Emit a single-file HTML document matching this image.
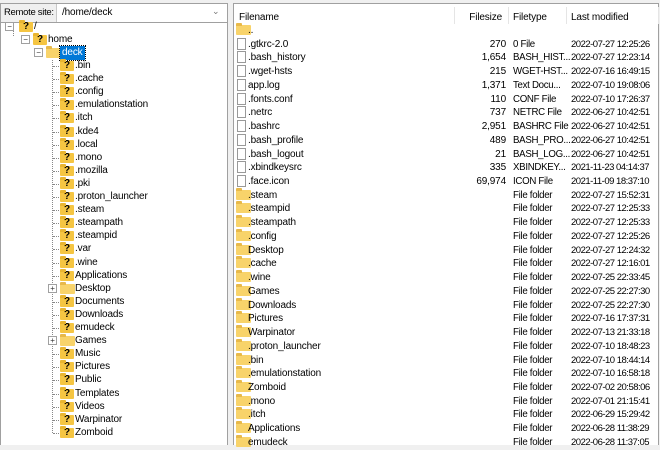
<!DOCTYPE html>
<html><head><meta charset="utf-8"><style>
*{margin:0;padding:0;box-sizing:border-box}
body{width:660px;height:445px;overflow:hidden;background:#f0f0f0;font-family:"Liberation Sans",sans-serif;font-size:10px;letter-spacing:-0.15px;color:#000;position:relative}
.abs{position:absolute}
#left{left:0;top:3px;width:228px;height:442px;background:#fff;border:1px solid #a0a0a0;border-bottom:none}
#bar{left:0;top:3px;width:228px;height:20px;background:#fff;border:1px solid #a0a0a0}
#lbl{left:1px;top:4px;width:56px;height:18px;background:#f0f0f0;border-right:1px solid #c8c8c8;font-size:9.5px;padding:3px 0 0 3px;white-space:nowrap;letter-spacing:-0.3px}
#path{left:62px;top:7px}
#chev{left:212px;top:6px;color:#777;font-size:9px}
.tr{position:absolute;height:13px;line-height:14px;white-space:nowrap}
.q{position:absolute;width:14px;height:10px;background:#f5c542;border-radius:1px;top:2px;font-weight:bold;font-size:10px;line-height:10px;text-align:center;color:#000}
.q:before{content:"";position:absolute;left:0;top:-2px;width:6px;height:3px;background:#e9b530;border-radius:1px 1px 0 0}
.fo{position:absolute;width:15px;height:10px;background:#f8d36a;top:2px;border-radius:1px}
.fo:before{content:"";position:absolute;left:0;top:-2px;width:6px;height:3px;background:#e8b94a;border-radius:1px 1px 0 0}
.ex{position:absolute;width:9px;height:9px;border:1px solid #a0a0a0;background:#fff;top:2px;font-size:8px;line-height:7px;text-align:center;color:#333}
.hd{position:absolute;border-top:1px dotted #888;height:0;width:8px;top:7px}
#right{left:233px;top:3px;width:426px;height:442px;background:#fff;border:1px solid #a0a0a0;border-bottom:none}
.h{position:absolute;top:8px}
.sep{position:absolute;top:3px;width:1px;height:17px;background:#e5e5e5}
.r{position:absolute;left:0;width:426px;height:13.7px;line-height:15px;white-space:nowrap}
.r .n{position:absolute;left:14px}
.r .s{position:absolute;right:154px;text-align:right}
.r .t{position:absolute;left:279px;font-size:9.7px;letter-spacing:-0.3px}
.r .m{position:absolute;left:337px;font-size:9.5px;letter-spacing:-0.5px}
.r .fo{left:2px;top:2px}
.pg{position:absolute;left:3px;top:1px;width:9px;height:12px;border:1px solid #999;background:#fff}
</style></head><body>
<div id="left" class="abs"></div>
<div id="bar" class="abs"></div>
<div id="lbl" class="abs">Remote site:</div>
<div id="path" class="abs">/home/deck</div>
<div id="chev" class="abs">&#8964;</div>

<div class="abs" style="left:52px;top:60px;height:373px;border-left:1px dotted #888"></div>
<div class="abs" style="left:13px;top:30px;height:6px;border-left:1px dotted #888"></div>

<div class="tr" style="top:20px;left:0"><div class="ex" style="left:5px">−</div><div class="q" style="left:19px">?</div><span style="position:absolute;left:34px">/</span></div>
<div class="tr" style="top:33px;left:0"><div class="ex" style="left:21px">−</div><div class="q" style="left:33px">?</div><span style="position:absolute;left:48px">home</span></div>
<div class="tr" style="top:46px;left:0"><div class="ex" style="left:34px">−</div><div class="fo" style="left:46px"></div><span style="position:absolute;left:60px;top:0;background:#0078d7;color:#fff;padding:0 2px;outline:1px dotted #000">deck</span></div>

<div id="tree" class="abs" style="left:0;top:59px;width:228px">
<div class="tr" style="top:0px"><div class="hd" style="left:53px"></div><div class="q" style="left:60px">?</div><span style="position:absolute;left:75px">.bin</span></div>
<div class="tr" style="top:13.1px"><div class="hd" style="left:53px"></div><div class="q" style="left:60px">?</div><span style="position:absolute;left:75px">.cache</span></div>
<div class="tr" style="top:26.2px"><div class="hd" style="left:53px"></div><div class="q" style="left:60px">?</div><span style="position:absolute;left:75px">.config</span></div>
<div class="tr" style="top:39.3px"><div class="hd" style="left:53px"></div><div class="q" style="left:60px">?</div><span style="position:absolute;left:75px">.emulationstation</span></div>
<div class="tr" style="top:52.4px"><div class="hd" style="left:53px"></div><div class="q" style="left:60px">?</div><span style="position:absolute;left:75px">.itch</span></div>
<div class="tr" style="top:65.5px"><div class="hd" style="left:53px"></div><div class="q" style="left:60px">?</div><span style="position:absolute;left:75px">.kde4</span></div>
<div class="tr" style="top:78.6px"><div class="hd" style="left:53px"></div><div class="q" style="left:60px">?</div><span style="position:absolute;left:75px">.local</span></div>
<div class="tr" style="top:91.7px"><div class="hd" style="left:53px"></div><div class="q" style="left:60px">?</div><span style="position:absolute;left:75px">.mono</span></div>
<div class="tr" style="top:104.8px"><div class="hd" style="left:53px"></div><div class="q" style="left:60px">?</div><span style="position:absolute;left:75px">.mozilla</span></div>
<div class="tr" style="top:117.9px"><div class="hd" style="left:53px"></div><div class="q" style="left:60px">?</div><span style="position:absolute;left:75px">.pki</span></div>
<div class="tr" style="top:131px"><div class="hd" style="left:53px"></div><div class="q" style="left:60px">?</div><span style="position:absolute;left:75px">.proton_launcher</span></div>
<div class="tr" style="top:144.1px"><div class="hd" style="left:53px"></div><div class="q" style="left:60px">?</div><span style="position:absolute;left:75px">.steam</span></div>
<div class="tr" style="top:157.2px"><div class="hd" style="left:53px"></div><div class="q" style="left:60px">?</div><span style="position:absolute;left:75px">.steampath</span></div>
<div class="tr" style="top:170.3px"><div class="hd" style="left:53px"></div><div class="q" style="left:60px">?</div><span style="position:absolute;left:75px">.steampid</span></div>
<div class="tr" style="top:183.4px"><div class="hd" style="left:53px"></div><div class="q" style="left:60px">?</div><span style="position:absolute;left:75px">.var</span></div>
<div class="tr" style="top:196.5px"><div class="hd" style="left:53px"></div><div class="q" style="left:60px">?</div><span style="position:absolute;left:75px">.wine</span></div>
<div class="tr" style="top:209.6px"><div class="hd" style="left:53px"></div><div class="q" style="left:60px">?</div><span style="position:absolute;left:75px">Applications</span></div>
<div class="tr" style="top:222.7px"><div class="ex" style="left:48px">+</div><div class="fo" style="left:60px"></div><span style="position:absolute;left:75px">Desktop</span></div>
<div class="tr" style="top:235.8px"><div class="hd" style="left:53px"></div><div class="q" style="left:60px">?</div><span style="position:absolute;left:75px">Documents</span></div>
<div class="tr" style="top:248.9px"><div class="hd" style="left:53px"></div><div class="q" style="left:60px">?</div><span style="position:absolute;left:75px">Downloads</span></div>
<div class="tr" style="top:262px"><div class="hd" style="left:53px"></div><div class="q" style="left:60px">?</div><span style="position:absolute;left:75px">emudeck</span></div>
<div class="tr" style="top:275.1px"><div class="ex" style="left:48px">+</div><div class="fo" style="left:60px"></div><span style="position:absolute;left:75px">Games</span></div>
<div class="tr" style="top:288.2px"><div class="hd" style="left:53px"></div><div class="q" style="left:60px">?</div><span style="position:absolute;left:75px">Music</span></div>
<div class="tr" style="top:301.3px"><div class="hd" style="left:53px"></div><div class="q" style="left:60px">?</div><span style="position:absolute;left:75px">Pictures</span></div>
<div class="tr" style="top:314.4px"><div class="hd" style="left:53px"></div><div class="q" style="left:60px">?</div><span style="position:absolute;left:75px">Public</span></div>
<div class="tr" style="top:327.5px"><div class="hd" style="left:53px"></div><div class="q" style="left:60px">?</div><span style="position:absolute;left:75px">Templates</span></div>
<div class="tr" style="top:340.6px"><div class="hd" style="left:53px"></div><div class="q" style="left:60px">?</div><span style="position:absolute;left:75px">Videos</span></div>
<div class="tr" style="top:353.7px"><div class="hd" style="left:53px"></div><div class="q" style="left:60px">?</div><span style="position:absolute;left:75px">Warpinator</span></div>
<div class="tr" style="top:366.8px"><div class="hd" style="left:53px"></div><div class="q" style="left:60px">?</div><span style="position:absolute;left:75px">Zomboid</span></div>
</div>

<div id="right" class="abs">
<div class="h" style="left:5px">Filename</div>
<div class="sep" style="left:220px"></div>
<div class="h" style="right:156px">Filesize</div>
<div class="sep" style="left:274px"></div>
<div class="h" style="left:279px">Filetype</div>
<div class="sep" style="left:332px"></div>
<div class="h" style="left:337px">Last modified</div>
<div class="sep" style="left:424px"></div>
<div class="abs" style="left:0;top:19px;width:424px">
<div class="r" style="top:0"><div class="fo"></div><span class="n">..</span></div>
<div class="r" style="top:13.73px"><div class="pg"></div><span class="n">.gtkrc-2.0</span><span class="s">270</span><span class="t">0 File</span><span class="m">2022-07-27 12:25:26</span></div>
<div class="r" style="top:27.46px"><div class="pg"></div><span class="n">.bash_history</span><span class="s">1,654</span><span class="t">BASH_HIST...</span><span class="m">2022-07-27 12:23:14</span></div>
<div class="r" style="top:41.19px"><div class="pg"></div><span class="n">.wget-hsts</span><span class="s">215</span><span class="t">WGET-HST...</span><span class="m">2022-07-16 16:49:15</span></div>
<div class="r" style="top:54.92px"><div class="pg"></div><span class="n">app.log</span><span class="s">1,371</span><span class="t">Text Docu...</span><span class="m">2022-07-10 19:08:06</span></div>
<div class="r" style="top:68.65px"><div class="pg"></div><span class="n">.fonts.conf</span><span class="s">110</span><span class="t">CONF File</span><span class="m">2022-07-10 17:26:37</span></div>
<div class="r" style="top:82.38px"><div class="pg"></div><span class="n">.netrc</span><span class="s">737</span><span class="t">NETRC File</span><span class="m">2022-06-27 10:42:51</span></div>
<div class="r" style="top:96.11px"><div class="pg"></div><span class="n">.bashrc</span><span class="s">2,951</span><span class="t">BASHRC File</span><span class="m">2022-06-27 10:42:51</span></div>
<div class="r" style="top:109.84px"><div class="pg"></div><span class="n">.bash_profile</span><span class="s">489</span><span class="t">BASH_PRO...</span><span class="m">2022-06-27 10:42:51</span></div>
<div class="r" style="top:123.57px"><div class="pg"></div><span class="n">.bash_logout</span><span class="s">21</span><span class="t">BASH_LOG...</span><span class="m">2022-06-27 10:42:51</span></div>
<div class="r" style="top:137.3px"><div class="pg"></div><span class="n">.xbindkeysrc</span><span class="s">335</span><span class="t">XBINDKEY...</span><span class="m">2021-11-23 04:14:37</span></div>
<div class="r" style="top:151.03px"><div class="pg"></div><span class="n">.face.icon</span><span class="s">69,974</span><span class="t">ICON File</span><span class="m">2021-11-09 18:37:10</span></div>
<div class="r" style="top:164.76px"><div class="fo"></div><span class="n">.steam</span><span class="t">File folder</span><span class="m">2022-07-27 15:52:31</span></div>
<div class="r" style="top:178.49px"><div class="fo"></div><span class="n">.steampid</span><span class="t">File folder</span><span class="m">2022-07-27 12:25:33</span></div>
<div class="r" style="top:192.22px"><div class="fo"></div><span class="n">.steampath</span><span class="t">File folder</span><span class="m">2022-07-27 12:25:33</span></div>
<div class="r" style="top:205.95px"><div class="fo"></div><span class="n">.config</span><span class="t">File folder</span><span class="m">2022-07-27 12:25:26</span></div>
<div class="r" style="top:219.68px"><div class="fo"></div><span class="n">Desktop</span><span class="t">File folder</span><span class="m">2022-07-27 12:24:32</span></div>
<div class="r" style="top:233.41px"><div class="fo"></div><span class="n">.cache</span><span class="t">File folder</span><span class="m">2022-07-27 12:16:01</span></div>
<div class="r" style="top:247.14px"><div class="fo"></div><span class="n">.wine</span><span class="t">File folder</span><span class="m">2022-07-25 22:33:45</span></div>
<div class="r" style="top:260.87px"><div class="fo"></div><span class="n">Games</span><span class="t">File folder</span><span class="m">2022-07-25 22:27:30</span></div>
<div class="r" style="top:274.6px"><div class="fo"></div><span class="n">Downloads</span><span class="t">File folder</span><span class="m">2022-07-25 22:27:30</span></div>
<div class="r" style="top:288.33px"><div class="fo"></div><span class="n">Pictures</span><span class="t">File folder</span><span class="m">2022-07-16 17:37:31</span></div>
<div class="r" style="top:302.06px"><div class="fo"></div><span class="n">Warpinator</span><span class="t">File folder</span><span class="m">2022-07-13 21:33:18</span></div>
<div class="r" style="top:315.79px"><div class="fo"></div><span class="n">.proton_launcher</span><span class="t">File folder</span><span class="m">2022-07-10 18:48:23</span></div>
<div class="r" style="top:329.52px"><div class="fo"></div><span class="n">.bin</span><span class="t">File folder</span><span class="m">2022-07-10 18:44:14</span></div>
<div class="r" style="top:343.25px"><div class="fo"></div><span class="n">.emulationstation</span><span class="t">File folder</span><span class="m">2022-07-10 16:58:18</span></div>
<div class="r" style="top:356.98px"><div class="fo"></div><span class="n">Zomboid</span><span class="t">File folder</span><span class="m">2022-07-02 20:58:06</span></div>
<div class="r" style="top:370.71px"><div class="fo"></div><span class="n">.mono</span><span class="t">File folder</span><span class="m">2022-07-01 21:15:41</span></div>
<div class="r" style="top:384.44px"><div class="fo"></div><span class="n">.itch</span><span class="t">File folder</span><span class="m">2022-06-29 15:29:42</span></div>
<div class="r" style="top:398.17px"><div class="fo"></div><span class="n">Applications</span><span class="t">File folder</span><span class="m">2022-06-28 11:38:29</span></div>
<div class="r" style="top:411.9px"><div class="fo"></div><span class="n">emudeck</span><span class="t">File folder</span><span class="m">2022-06-28 11:37:05</span></div>
</div>
</div>
</body></html>
